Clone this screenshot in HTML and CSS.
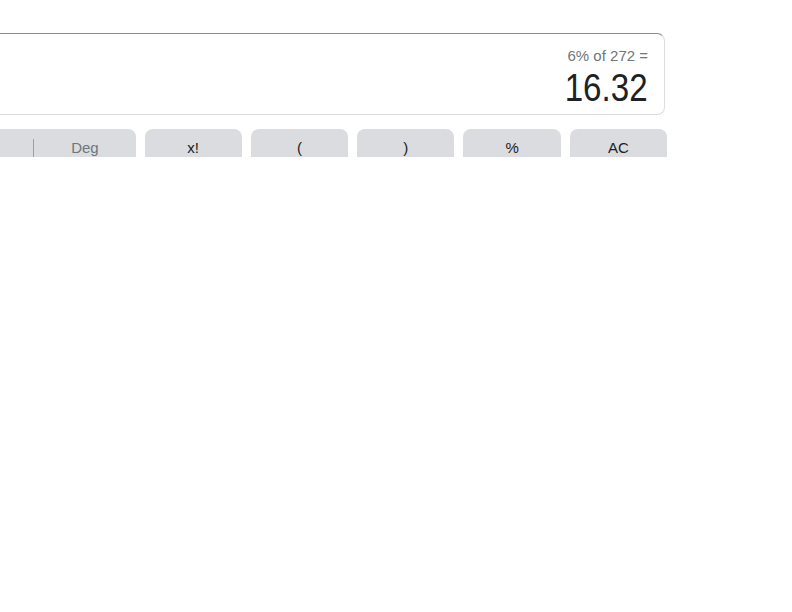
FILE: index.html
```html
<!DOCTYPE html>
<html>
<head>
<meta charset="utf-8">
<link rel="stylesheet" href="styles.css">
</head>
<body>
<div class="calc">
  <div class="display">
    <div class="history">6% of 272 =</div>
    <div class="result"><span class="result-num">16.32</span></div>
  </div>
  <div class="keys-clip">
    <div class="keys">
      <div class="key toggle"><span class="half">Rad</span><span class="sep"></span><span class="half dim">Deg</span></div>
      <div class="key">x!</div>
      <div class="key">(</div>
      <div class="key">)</div>
      <div class="key">%</div>
      <div class="key">AC</div>
    </div>
  </div>
</div>
</body>
</html>
```

FILE: styles.css
```css
html, body {
  margin: 0;
  padding: 0;
  background: #ffffff;
}
body {
  font-family: "Liberation Sans", Arial, sans-serif;
  overflow: hidden;
}
.calc {
  margin-left: -68px;
  width: 735px;
  padding-top: 33px;
}
.display {
  box-sizing: border-box;
  margin-right: 2px;
  height: 82px;
  border: 1px solid #dadce0;
  border-top-color: #8a8d91;
  border-radius: 0 8px 8px 8px;
  padding: 13px 16px 0 0;
  text-align: right;
}
.history {
  font-size: 15px;
  color: #70757a;
  line-height: 17px;
}
.result {
  margin-top: 4px;
  font-size: 39px;
  line-height: 40px;
  color: #202124;
}
.result-num {
  display: inline-block;
  transform: scaleX(0.85);
  transform-origin: right center;
}
.keys-clip {
  margin-top: 14px;
  height: 28px;
  overflow: hidden;
}
.keys {
  display: grid;
  grid-template-columns: repeat(7, 1fr);
  column-gap: 9px;
}
.key {
  height: 36px;
  background: #dadce0;
  border-radius: 8px;
  display: flex;
  align-items: center;
  justify-content: center;
  font-size: 15px;
  color: #202124;
}
.toggle {
  grid-column: span 2;
  justify-content: stretch;
}
.half {
  flex: 1;
  text-align: center;
}
.dim {
  color: #70757a;
}
.sep {
  width: 1px;
  height: 20px;
  background: #9aa0a6;
  align-self: flex-start;
  margin-top: 10px;
}
```
